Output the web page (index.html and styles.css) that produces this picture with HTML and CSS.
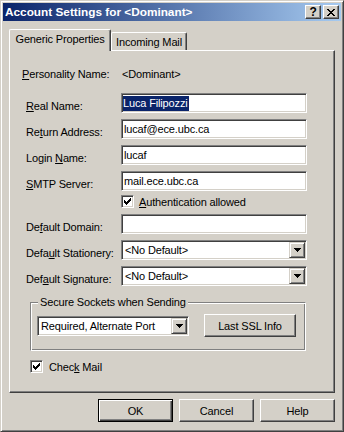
FILE: index.html
```html
<!DOCTYPE html>
<html lang="en">
<head>
  <meta charset="UTF-8" />
  <meta name="viewport" content="width=device-width, initial-scale=1.0">
  <title>Account Settings for &lt;Dominant&gt;</title>
  <link rel="stylesheet" href="styles.css">
</head>
<body>

  <div class="window">
    <div class="title-bar">
      <span class="title">Account Settings for &lt;Dominant&gt;</span>
      <div class="title-buttons">
        <span class="title-btn help-glyph">?</span>
        <span class="title-btn">
          <svg width="8" height="7" viewBox="0 0 8 7"><path d="M0 0h2v1H0z M6 0h2v1H6z M1 1h2v1H1z M5 1h2v1H5z M2 2h4v1H2z M3 3h2v1H3z M2 4h4v1H2z M1 5h2v1H1z M5 5h2v1H5z M0 6h2v1H0z M6 6h2v1H6z"/></svg>
        </span>
      </div>
    </div>

    <div class="dialog-body">
      <div class="tabs">
        <div class="tab active">Generic Properties</div>
        <div class="tab">Incoming Mail</div>
      </div>

      <div class="tab-panel">
        <div class="info-row">
          <span class="info-label"><u>P</u>ersonality Name:</span>
          <span>&lt;Dominant&gt;</span>
        </div>

        <div class="field-row first">
          <span class="field-label"><u>R</u>eal Name:</span>
          <div class="textbox"><span class="selected-text">Luca Filipozzi</span></div>
        </div>
        <div class="field-row">
          <span class="field-label">Re<u>t</u>urn Address:</span>
          <div class="textbox">lucaf@ece.ubc.ca</div>
        </div>
        <div class="field-row">
          <span class="field-label">Login <u>N</u>ame:</span>
          <div class="textbox">lucaf</div>
        </div>
        <div class="field-row">
          <span class="field-label"><u>S</u>MTP Server:</span>
          <div class="textbox">mail.ece.ubc.ca</div>
        </div>

        <div class="check-row auth">
          <span class="checkbox">
            <svg width="7" height="7" viewBox="0 0 7 7"><path d="M6 0h1v1H6z M5 1h2v1H5z M0 2h1v1H0z M4 2h3v1H4z M0 3h2v1H0z M3 3h3v1H3z M0 4h5v1H0z M1 5h3v1H1z M2 6h1v1H2z"/></svg>
          </span>
          <span><u>A</u>uthentication allowed</span>
        </div>

        <div class="field-row">
          <span class="field-label">De<u>f</u>ault Domain:</span>
          <div class="textbox"></div>
        </div>
        <div class="field-row">
          <span class="field-label">Defa<u>u</u>lt Stationery:</span>
          <div class="combo">
            <span class="combo-text">&lt;No Default&gt;</span>
            <span class="drop-btn">
              <svg width="7" height="4" viewBox="0 0 7 4"><path d="M0 0h7v1H0z M1 1h5v1H1z M2 2h3v1H2z M3 3h1v1H3z"/></svg>
            </span>
          </div>
        </div>
        <div class="field-row">
          <span class="field-label">Def<u>a</u>ult Signature:</span>
          <div class="combo">
            <span class="combo-text">&lt;No Default&gt;</span>
            <span class="drop-btn">
              <svg width="7" height="4" viewBox="0 0 7 4"><path d="M0 0h7v1H0z M1 1h5v1H1z M2 2h3v1H2z M3 3h1v1H3z"/></svg>
            </span>
          </div>
        </div>

        <fieldset class="group-box">
          <legend>Secure Sockets when Sending</legend>
          <div class="group-row">
            <div class="combo small">
              <span class="combo-text">Required, Alternate Port</span>
              <span class="drop-btn">
                <svg width="7" height="4" viewBox="0 0 7 4"><path d="M0 0h7v1H0z M1 1h5v1H1z M2 2h3v1H2z M3 3h1v1H3z"/></svg>
              </span>
            </div>
            <span class="btn ssl-btn">Last SSL Info</span>
          </div>
        </fieldset>

        <div class="check-row check-mail">
          <span class="checkbox">
            <svg width="7" height="7" viewBox="0 0 7 7"><path d="M6 0h1v1H6z M5 1h2v1H5z M0 2h1v1H0z M4 2h3v1H4z M0 3h2v1H0z M3 3h3v1H3z M0 4h5v1H0z M1 5h3v1H1z M2 6h1v1H2z"/></svg>
          </span>
          <span>Chec<u>k</u> Mail</span>
        </div>
      </div>

      <div class="actions">
        <span class="btn default">OK</span>
        <span class="btn">Cancel</span>
        <span class="btn">Help</span>
      </div>
    </div>
  </div>

</body>
</html>
```

FILE: styles.css
```css
body {
  margin: 0;
  background: #D4D0C8;
  font-family: "Liberation Sans", Arial, sans-serif;
  font-size: 11px;
  letter-spacing: -0.15px;
  color: #000;
}

u {
  text-decoration: underline;
  text-underline-offset: 1px;
}

.window {
  width: 344px;
  height: 432px;
  box-sizing: border-box;
  border: 1px solid;
  border-color: #D4D0C8 #404040 #404040 #D4D0C8;
  box-shadow: inset 1px 1px 0 #fff, inset -1px -1px 0 #808080;
  padding: 2px;
  display: flex;
  flex-direction: column;
}

/* caption */
.title-bar {
  height: 18px;
  flex: none;
  display: flex;
  align-items: center;
  justify-content: space-between;
  padding: 0 2px;
  background: linear-gradient(to right, #0A246A, #A6CAF0);
}

.title {
  color: #fff;
  font-weight: bold;
  font-size: 11.8px;
  letter-spacing: 0;
}

.title-buttons {
  display: flex;
  gap: 2px;
}

.title-btn {
  width: 16px;
  height: 14px;
  box-sizing: border-box;
  display: flex;
  align-items: center;
  justify-content: center;
  background: #D4D0C8;
  border: 1px solid;
  border-color: #fff #404040 #404040 #fff;
  box-shadow: inset -1px -1px 0 #808080;
}

.help-glyph {
  font-weight: bold;
  font-size: 12px;
  line-height: 12px;
}

/* body */
.dialog-body {
  flex: 1;
  display: flex;
  flex-direction: column;
  padding: 8px 6px 7px;
}

.tabs {
  height: 21px;
  display: flex;
  align-items: flex-end;
}

.tab {
  width: 76px;
  height: 18px;
  box-sizing: border-box;
  padding-top: 3px;
  line-height: 13px;
  text-align: center;
  border: 1px solid;
  border-bottom: none;
  border-color: #fff #404040 #404040 #fff;
  box-shadow: inset -1px 0 0 #808080;
  border-radius: 2px 2px 0 0;
  background: #D4D0C8;
}

.tab.active {
  width: 102px;
  height: 22px;
  margin-bottom: -1px;
  padding-top: 3px;
  position: relative;
  z-index: 1;
}

.tab-panel {
  height: 343px;
  box-sizing: border-box;
  border: 1px solid;
  border-color: #fff #404040 #404040 #fff;
  box-shadow: inset -1px -1px 0 #808080;
  padding: 15px 0 0 16px;
  display: flex;
  flex-direction: column;
}

.info-row {
  height: 16px;
  display: flex;
  align-items: center;
  margin-left: -4px;
}

.info-label {
  width: 100px;
}

.field-row {
  height: 20px;
  display: flex;
  align-items: center;
  margin-top: 6px;
}

.field-row.first {
  margin-top: 11px;
}

.field-label {
  width: 95px;
  padding-top: 5px;
}

.textbox,
.combo {
  width: 186px;
  height: 20px;
  box-sizing: border-box;
  border: 1px solid;
  border-color: #808080 #fff #fff #808080;
  box-shadow: inset 1px 1px 0 #404040, inset -1px -1px 0 #D4D0C8;
  background: #fff;
}

.textbox {
  padding: 0 2px;
  line-height: 18px;
}

.selected-text {
  display: inline-block;
  line-height: 15px;
  background: #0A246A;
  color: #fff;
  padding: 0 1px 0 0;
  margin-left: -1px;
}

.combo {
  display: flex;
  align-items: center;
  padding: 1px;
}

.combo-text {
  flex: 1;
  padding-left: 2px;
}

.drop-btn {
  width: 16px;
  height: 16px;
  box-sizing: border-box;
  display: flex;
  align-items: center;
  justify-content: center;
  background: #D4D0C8;
  border: 1px solid;
  border-color: #D4D0C8 #404040 #404040 #D4D0C8;
  box-shadow: inset 1px 1px 0 #fff, inset -1px -1px 0 #808080;
}

.check-row {
  display: flex;
  align-items: center;
  height: 13px;
}

.check-row.auth {
  margin: 4px 0 0 95px;
  gap: 5px;
}

.check-row.check-mail {
  margin: 9px 0 0 4px;
  gap: 6px;
}

.checkbox {
  width: 13px;
  height: 13px;
  box-sizing: border-box;
  display: flex;
  align-items: center;
  justify-content: center;
  border: 1px solid;
  border-color: #808080 #fff #fff #808080;
  box-shadow: inset 1px 1px 0 #404040, inset -1px -1px 0 #D4D0C8;
  background: #fff;
}

/* secure sockets group */
.group-box {
  width: 276px;
  box-sizing: border-box;
  margin: 10px 0 0 4px;
  padding: 0 6px 13px;
  border: 1px solid;
  border-color: #808080 #fff #fff #808080;
  box-shadow: inset 1px 1px 0 #fff, inset -1px -1px 0 #808080;
}

.group-box legend {
  margin-left: 1px;
  padding: 0 2px;
  line-height: 13px;
  background: #D4D0C8;
}

.group-row {
  display: flex;
  align-items: center;
  margin-top: 5px;
  height: 23px;
}

.combo.small {
  width: 152px;
}

.btn {
  width: 75px;
  height: 23px;
  box-sizing: border-box;
  display: flex;
  align-items: center;
  justify-content: center;
  border: 1px solid;
  border-color: #fff #404040 #404040 #fff;
  box-shadow: inset -1px -1px 0 #808080;
  background: #D4D0C8;
}

.ssl-btn {
  width: 92px;
  margin-left: 15px;
}

.btn.default {
  border-color: #000;
  box-shadow: inset 1px 1px 0 #fff, inset -1px -1px 0 #404040, inset -2px -2px 0 #808080;
}

.actions {
  display: flex;
  justify-content: flex-end;
  gap: 6px;
  margin-top: 6px;
}
```
